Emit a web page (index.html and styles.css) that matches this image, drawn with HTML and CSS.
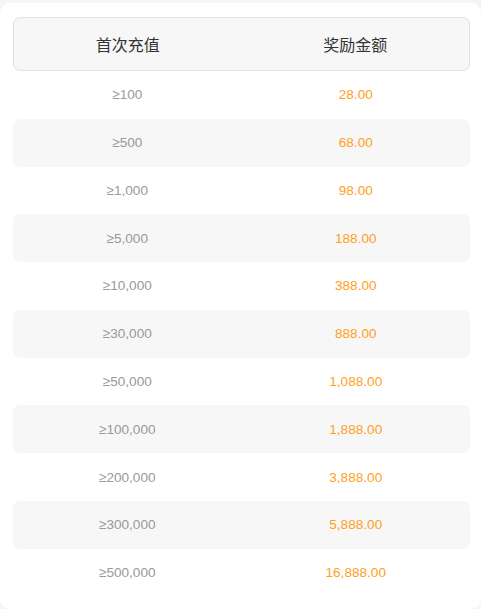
FILE: index.html
```html
<!DOCTYPE html>
<html lang="zh">
<head>
<meta charset="utf-8">
<title>首充奖励</title>
<link rel="stylesheet" href="styles.css">
</head>
<body>
<div class="card">
  <div class="table">
    <div class="head">
      <div class="cell">首次充值</div>
      <div class="cell">奖励金额</div>
    </div>
    <div class="row"><div class="cell amt">≥100</div><div class="cell bonus">28.00</div></div>
    <div class="row"><div class="cell amt">≥500</div><div class="cell bonus">68.00</div></div>
    <div class="row"><div class="cell amt">≥1,000</div><div class="cell bonus">98.00</div></div>
    <div class="row"><div class="cell amt">≥5,000</div><div class="cell bonus">188.00</div></div>
    <div class="row"><div class="cell amt">≥10,000</div><div class="cell bonus">388.00</div></div>
    <div class="row"><div class="cell amt">≥30,000</div><div class="cell bonus">888.00</div></div>
    <div class="row"><div class="cell amt">≥50,000</div><div class="cell bonus">1,088.00</div></div>
    <div class="row"><div class="cell amt">≥100,000</div><div class="cell bonus">1,888.00</div></div>
    <div class="row"><div class="cell amt">≥200,000</div><div class="cell bonus">3,888.00</div></div>
    <div class="row"><div class="cell amt">≥300,000</div><div class="cell bonus">5,888.00</div></div>
    <div class="row"><div class="cell amt">≥500,000</div><div class="cell bonus">16,888.00</div></div>
  </div>
</div>
</body>
</html>
```
FILE: styles.css
```css
html, body {
  margin: 0;
  padding: 0;
  background: #f5f5f5;
}
body {
  font-family: "Liberation Sans", Arial, "Noto Sans CJK SC", sans-serif;
  overflow: hidden;
}
.card {
  margin-top: 3px;
  background: #fff;
  border-radius: 10px;
  padding: 14px 11px 10px 13px;
  height: 606px;
  box-sizing: border-box;
}
.table {
  display: flex;
  flex-direction: column;
}
.head {
  display: grid;
  grid-template-columns: 1fr 1fr;
  height: 54px;
  box-sizing: border-box;
  border: 1px solid #e2e2e2;
  border-radius: 7px;
  background: #f7f7f7;
  align-items: center;
  font-family: "Noto Sans CJK SC", sans-serif;
  font-size: 16px;
  color: #333;
}
.head .cell {
  text-align: center;
  line-height: 20px;
}
.row {
  display: grid;
  grid-template-columns: 1fr 1fr;
  height: 47.78px;
  align-items: center;
  border-radius: 7px;
  font-size: 13.6px;
}
.row:nth-child(odd) {
  background: #f7f7f7;
}
.cell {
  text-align: center;
}
.amt {
  color: #9a9a9a;
}
.bonus {
  color: #ffa01e;
}
```
